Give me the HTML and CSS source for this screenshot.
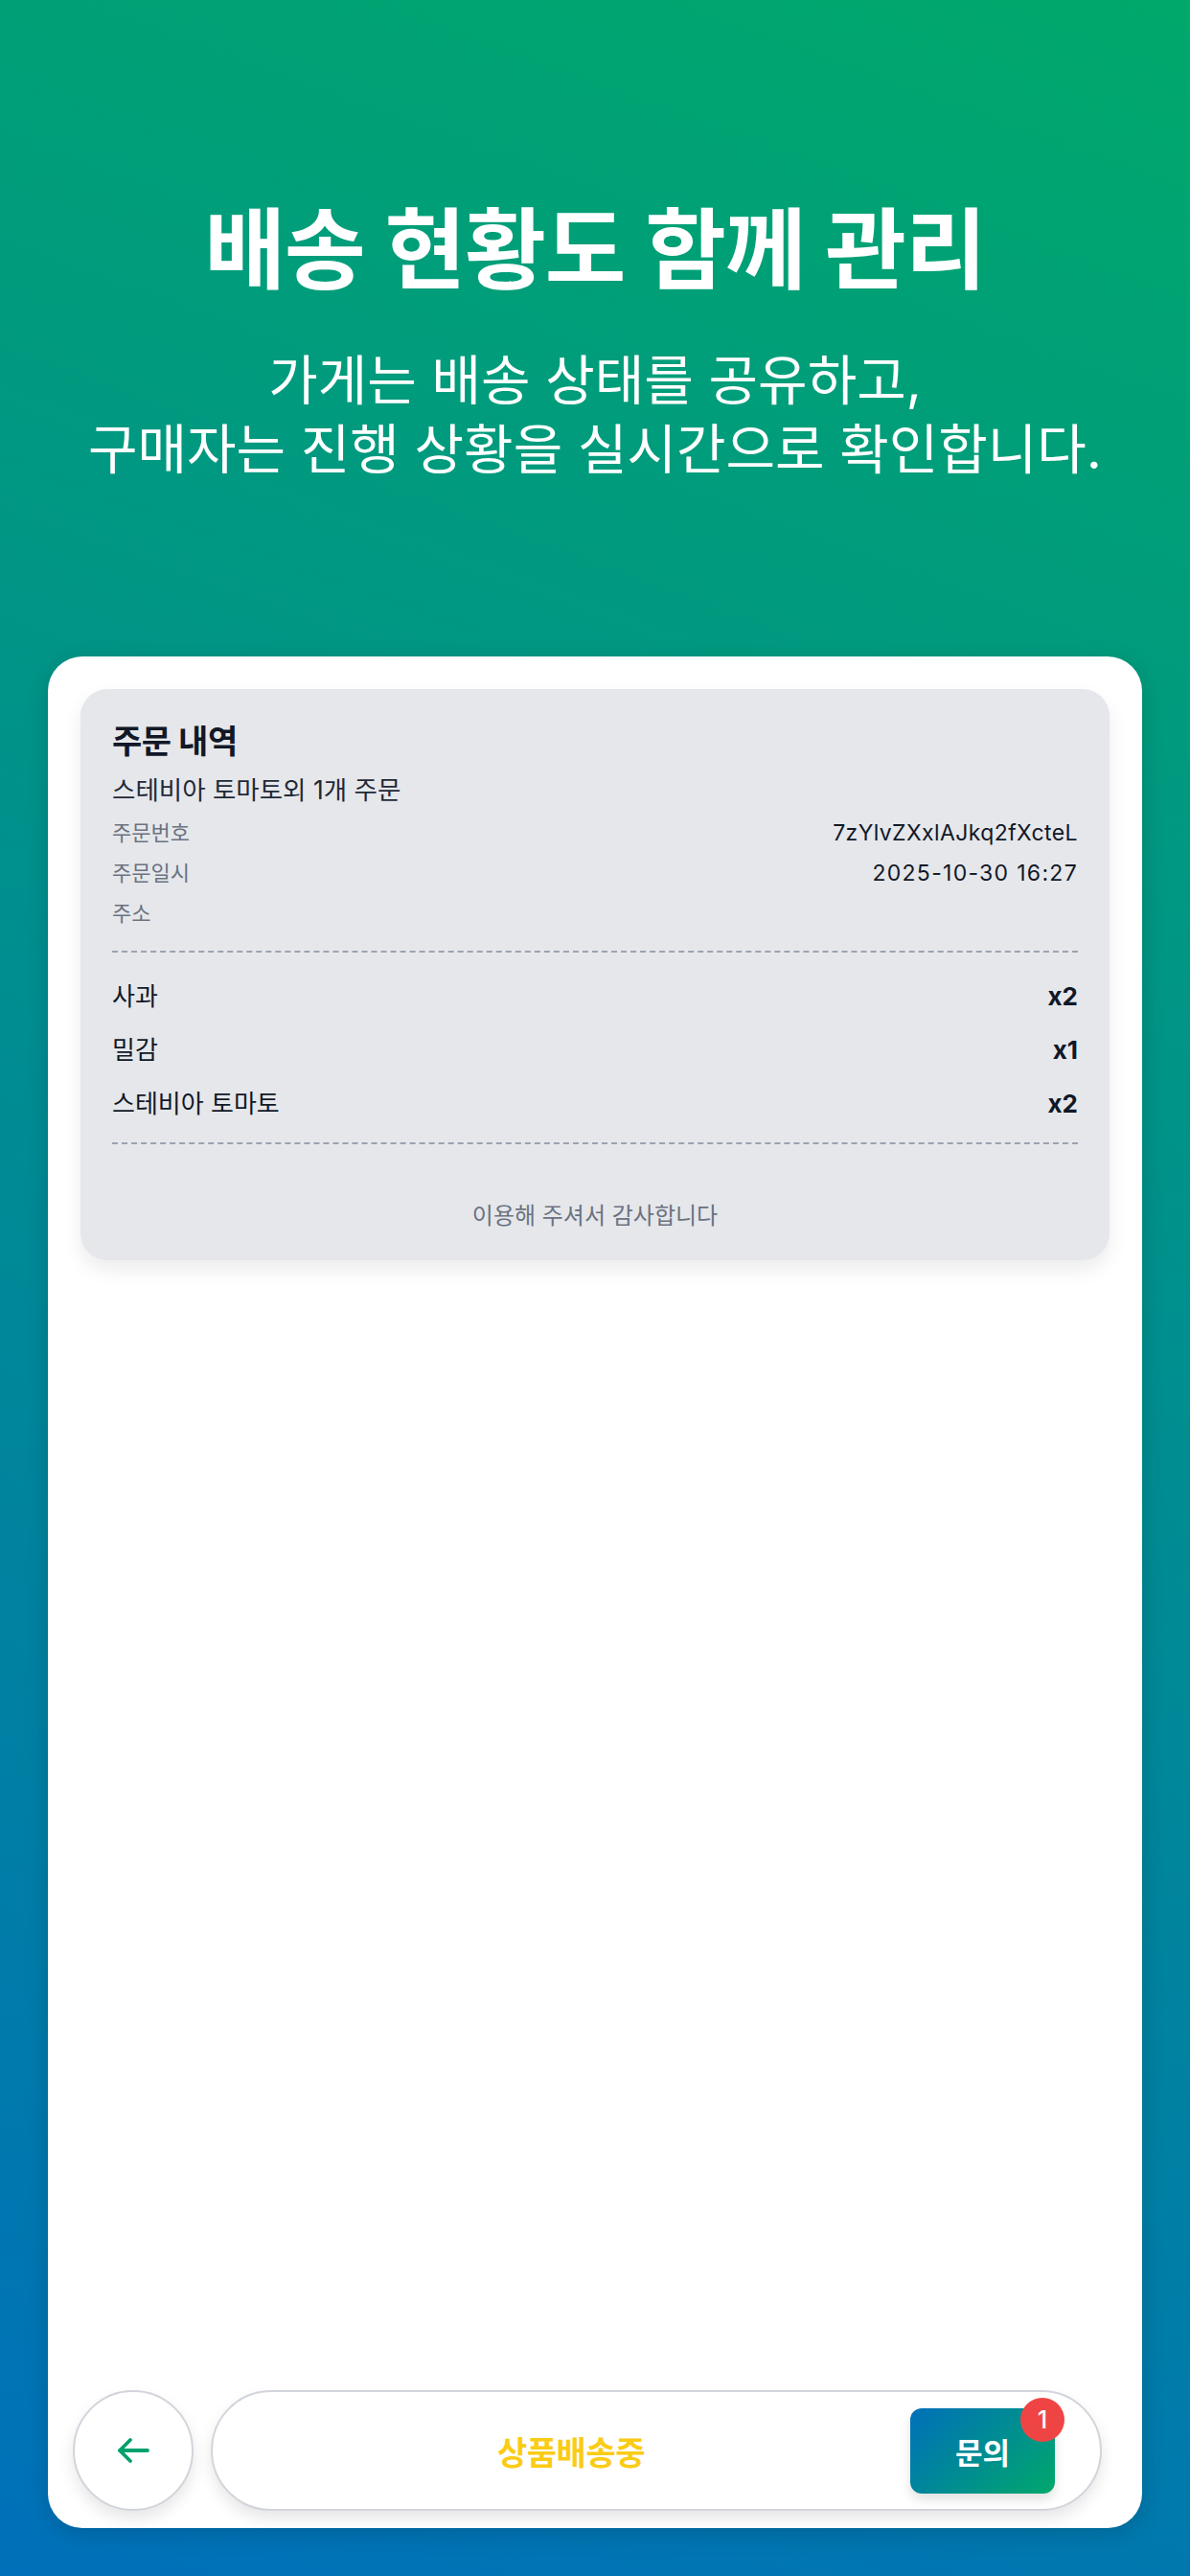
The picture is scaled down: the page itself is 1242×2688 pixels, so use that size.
FILE: index.html
```html
<!DOCTYPE html>
<html lang="ko">
<head>
  <meta charset="UTF-8" />
  <meta name="viewport" content="width=device-width, initial-scale=1.0"/>
  <title>배송 현황도 함께 관리</title>
  <link rel="stylesheet" href="styles.css">
</head>
<body>
  <div class="page">
    <header class="hero">
      <h1 class="hero-title">배송 현황도 함께 관리</h1>
      <p class="hero-sub">가게는 배송 상태를 공유하고,<br>구매자는 진행 상황을 실시간으로 확인합니다.</p>
    </header>

    <main class="phone">
      <section class="receipt">
        <h2 class="receipt-title">주문 내역</h2>
        <div class="receipt-summary">스테비아 토마토외 1개 주문</div>

        <div class="info-list">
          <div class="info-row">
            <span class="info-label">주문번호</span>
            <span class="info-value">7zYlvZXxlAJkq2fXcteL</span>
          </div>
          <div class="info-row">
            <span class="info-label">주문일시</span>
            <span class="info-value date">2025-10-30 16:27</span>
          </div>
          <div class="info-row">
            <span class="info-label">주소</span>
            <span class="info-value"></span>
          </div>
        </div>

        <div class="divider"></div>

        <ul class="items">
          <li class="item"><span>사과</span><span class="qty">x2</span></li>
          <li class="item"><span>밀감</span><span class="qty">x1</span></li>
          <li class="item"><span>스테비아 토마토</span><span class="qty">x2</span></li>
        </ul>

        <div class="divider"></div>

        <p class="thanks">이용해 주셔서 감사합니다</p>
      </section>

      <nav class="bottom-bar">
        <button class="back-btn" aria-label="뒤로">
          <svg width="36" height="30" viewBox="0 0 36 30" fill="none" stroke="currentColor" stroke-width="3.8" stroke-linecap="round" stroke-linejoin="round">
            <path d="M33 15H4"/>
            <path d="M15 4L4 15L15 26"/>
          </svg>
        </button>
        <div class="status-pill">
          <span class="status-text">상품배송중</span>
          <button class="ask-btn">문의<span class="badge">1</span></button>
        </div>
      </nav>
    </main>
  </div>
</body>
</html>
```

FILE: styles.css
```css
* {
  box-sizing: border-box;
}

body {
  margin: 0;
  font-family: Inter, "Noto Sans CJK KR", sans-serif;
  background: linear-gradient(200deg, #00A86B 0%, #0070BA 100%);
  min-height: 100vh;
}

.page {
  display: flex;
  flex-direction: column;
  min-height: 100vh;
  padding-bottom: 50px;
}

/* Hero text */
.hero {
  padding-top: 207px;
  text-align: center;
  color: #fff;
}

.hero-title {
  margin: 0;
  font-size: 92px;
  line-height: 108px;
  font-weight: 700;
  letter-spacing: -1px;
}

.hero-sub {
  margin: 46px 0 0;
  font-size: 56px;
  line-height: 72px;
  font-weight: 400;
}

/* Phone card */
.phone {
  flex: 1;
  margin: 180px 50px 0;
  background: #fff;
  border-radius: 36px;
  box-shadow: 0 6px 24px rgba(0, 0, 0, 0.15);
  padding: 34px 34px 18px;
  display: flex;
  flex-direction: column;
}

.receipt {
  background: #E5E7EB;
  border-radius: 28px;
  padding: 33px 33px 29px;
  box-shadow: 0 10px 20px rgba(0, 0, 0, 0.08);
  color: #111827;
}

.receipt-title {
  margin: 0;
  font-size: 34px;
  line-height: 44px;
  font-weight: 700;
  letter-spacing: -0.5px;
}

.receipt-summary {
  margin-top: 10px;
  font-size: 26.5px;
  line-height: 36px;
  color: #1F2937;
}

.info-list {
  margin-top: 6px;
}

.info-row {
  display: flex;
  justify-content: space-between;
  font-size: 22px;
  line-height: 42px;
}

.info-label {
  color: #6B7280;
}

.info-value {
  color: #111827;
  font-size: 23px;
  letter-spacing: 0.4px;
}

.info-value.date {
  letter-spacing: 1.3px;
}

.divider {
  border-top: 2px dashed #9CA3AF;
  margin-top: 18px;
}

.items {
  list-style: none;
  margin: 0;
  padding: 18px 0 0;
}

.item {
  display: flex;
  justify-content: space-between;
  font-size: 26px;
  line-height: 56px;
  color: #111827;
}

.qty {
  font-weight: 700;
}

.items + .divider {
  margin-top: 12px;
}

.thanks {
  margin: 58px 0 0;
  text-align: center;
  font-size: 24px;
  line-height: 34px;
  color: #6B7280;
}

/* Bottom bar */
.bottom-bar {
  margin: auto 8px 0 -8px;
  display: flex;
  align-items: center;
  gap: 18px;
}

.back-btn {
  width: 126px;
  height: 126px;
  flex-shrink: 0;
  border-radius: 50%;
  border: 2px solid #D1D5DB;
  background: #fff;
  color: #02A06E;
  display: flex;
  align-items: center;
  justify-content: center;
  padding: 0;
  box-shadow: 0 8px 16px rgba(0, 0, 0, 0.1);
}

.status-pill {
  flex: 1;
  height: 126px;
  border-radius: 63px;
  border: 2px solid #D1D5DB;
  background: #fff;
  display: flex;
  align-items: center;
  padding: 0 47px 0 20px;
  box-shadow: 0 8px 16px rgba(0, 0, 0, 0.1);
}

.status-text {
  flex: 1;
  text-align: center;
  font-size: 34px;
  font-weight: 700;
  color: #FACC15;
  letter-spacing: -0.5px;
}

.ask-btn {
  position: relative;
  width: 151px;
  height: 89px;
  border: none;
  border-radius: 12px;
  background: linear-gradient(135deg, #0070BA, #00A86B);
  color: #fff;
  font-family: inherit;
  font-size: 31px;
  font-weight: 700;
  box-shadow: 0 6px 12px rgba(0, 0, 0, 0.12);
}

.badge {
  position: absolute;
  top: -11px;
  right: -10px;
  width: 46px;
  height: 46px;
  border-radius: 50%;
  background: #EF4444;
  color: #fff;
  font-size: 25px;
  font-weight: 500;
  line-height: 46px;
  text-align: center;
}
```
